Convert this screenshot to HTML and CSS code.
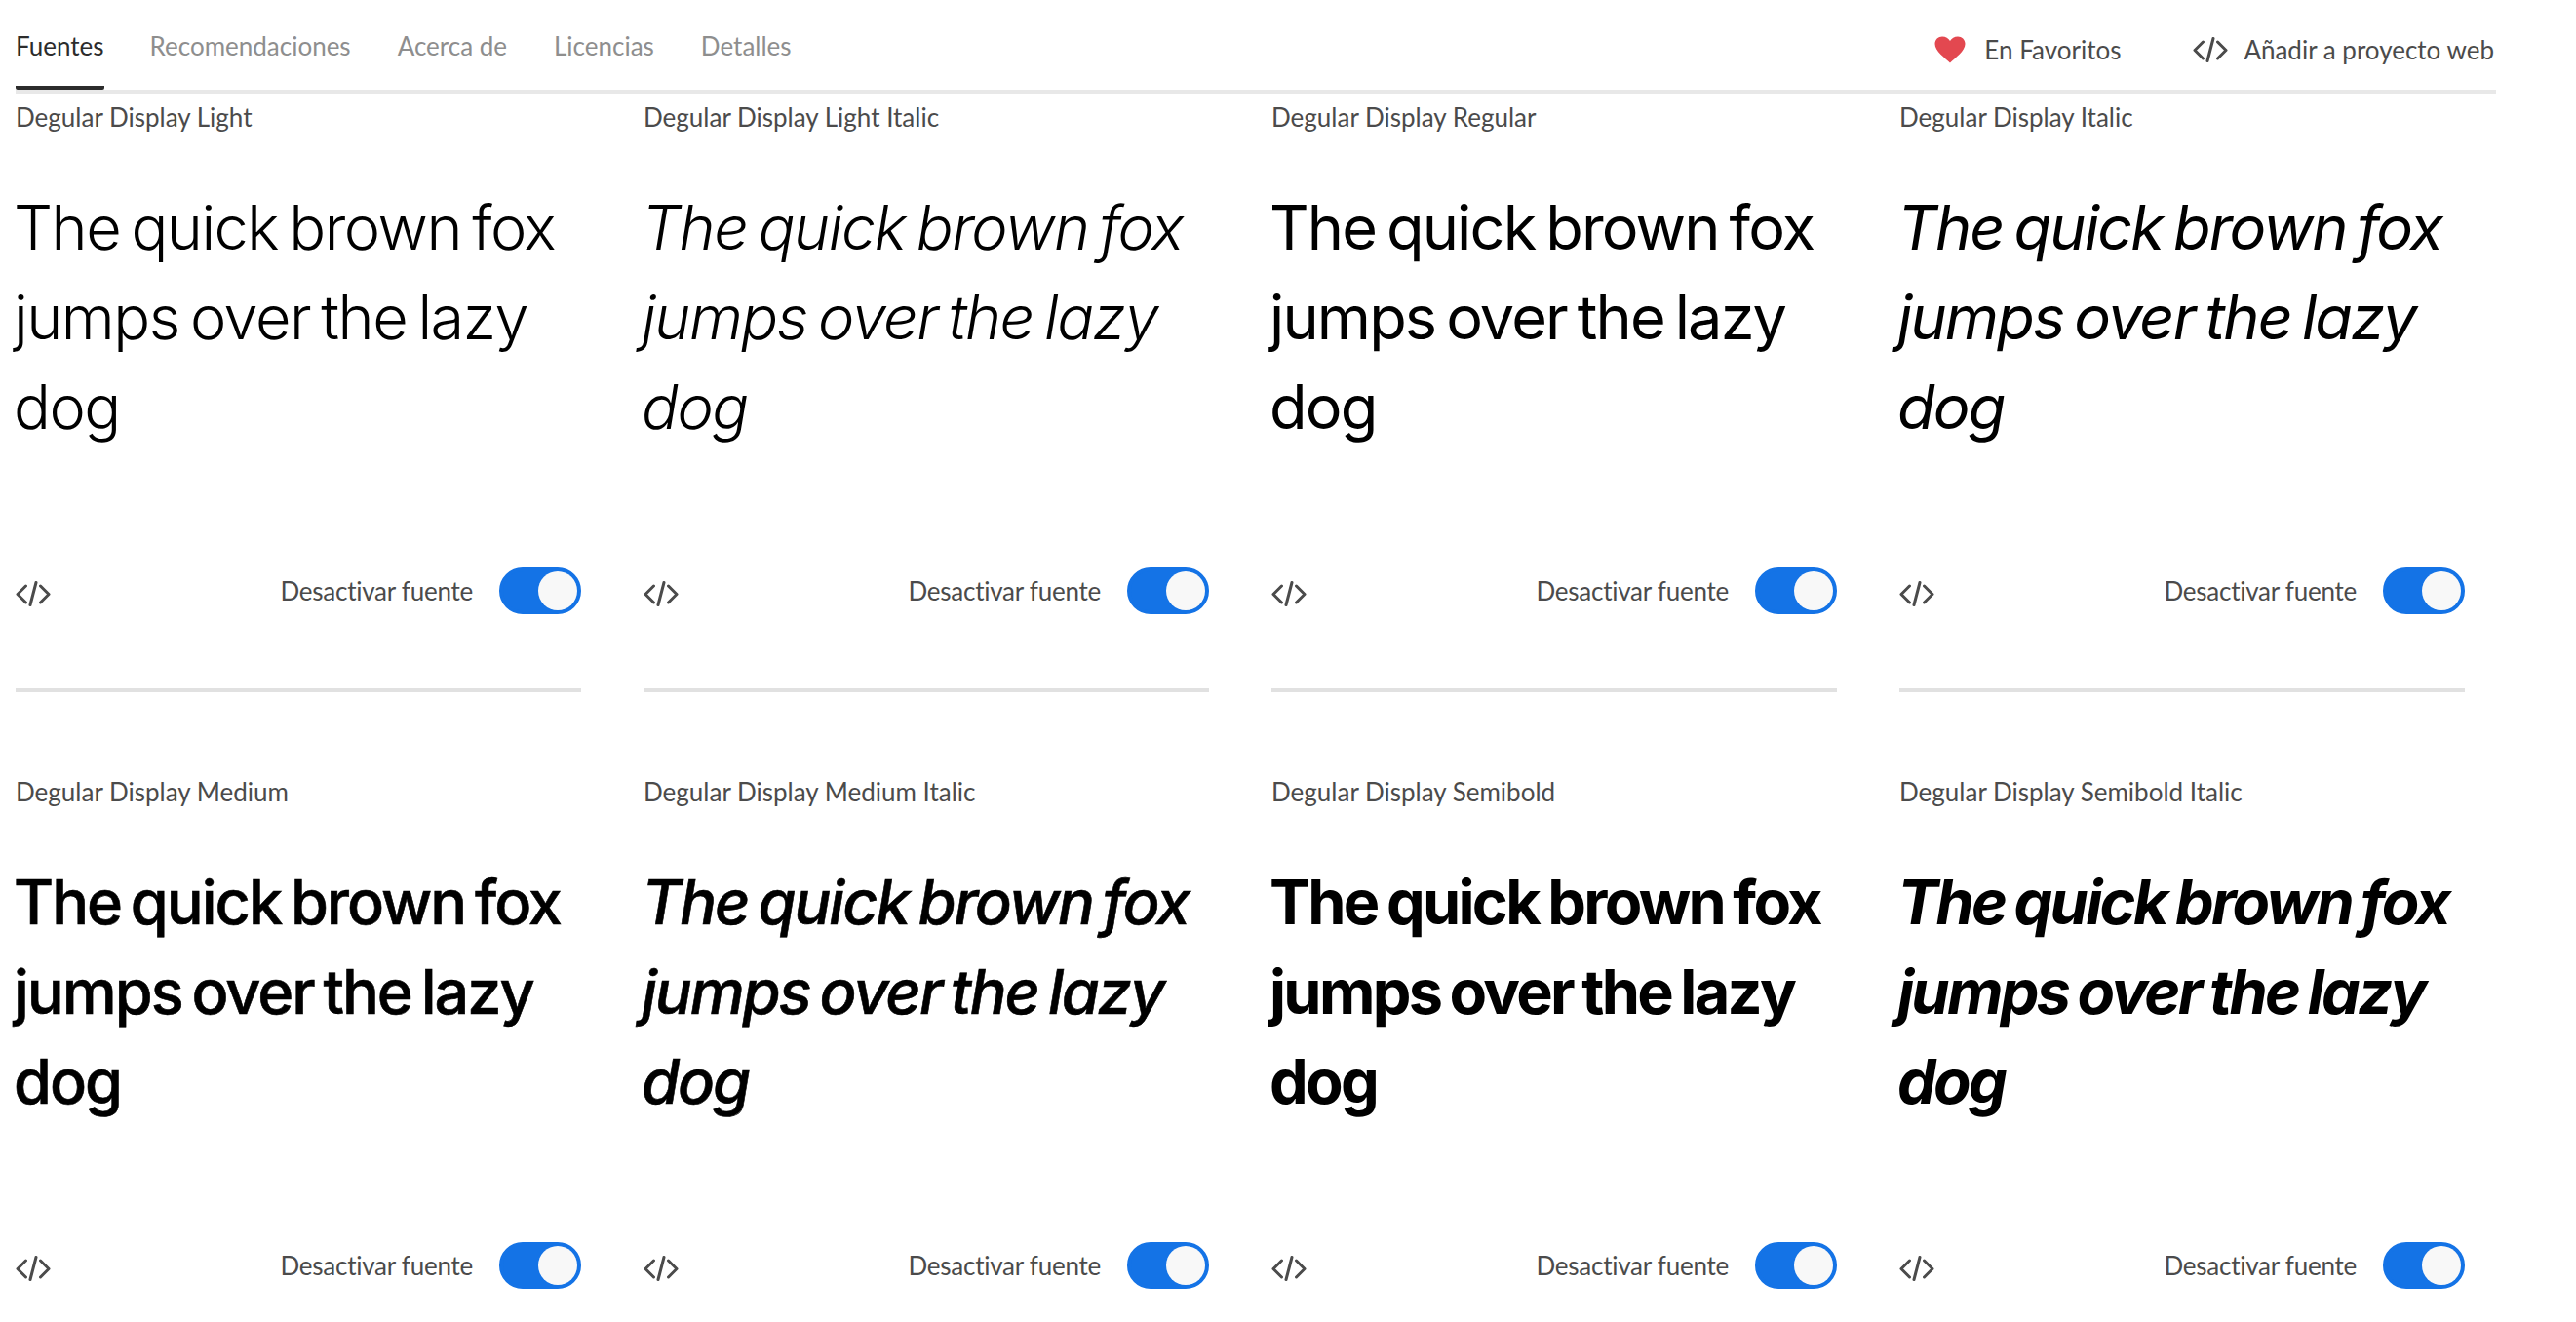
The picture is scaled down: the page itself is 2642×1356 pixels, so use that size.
FILE: index.html
```html
<!DOCTYPE html>
<html lang="es">
  <head>
    <meta charset="UTF-8">
    <title>Degular Display</title>
    <link rel="stylesheet" href="styles.css">
  </head>
  <body>
    <svg class="defs" width="0" height="0">
      <symbol id="code" viewBox="0 0 36 26">
        <path d="M10.5 5 L2 13.5 L10.5 22 M25.5 5 L34 13.5 L25.5 22 M21 1.5 L15 24.5" fill="none" stroke="currentColor" stroke-width="3" stroke-linecap="round" stroke-linejoin="round"/>
      </symbol>
    </svg>

    <header class="topbar">
      <nav class="tabs">
        <a class="tab active">Fuentes</a>
        <a class="tab">Recomendaciones</a>
        <a class="tab">Acerca de</a>
        <a class="tab">Licencias</a>
        <a class="tab">Detalles</a>
      </nav>
      <div class="actions">
        <span class="action">
          <svg class="heart" viewBox="0 0 32 28"><path d="M16 27.5 C11 22.5 0.5 15.5 0.5 8 C0.5 3.5 4 0.5 8 0.5 C11.5 0.5 14.5 2.5 16 5 C17.5 2.5 20.5 0.5 24 0.5 C28 0.5 31.5 3.5 31.5 8 C31.5 15.5 21 22.5 16 27.5 Z"/></svg>
          En Favoritos
        </span>
        <span class="action">
          <svg class="code-icon"><use href="#code"/></svg>
          Añadir a proyecto web
        </span>
      </div>
    </header>

    <main class="fonts">
      <article class="card">
        <h3 class="name">Degular Display Light</h3>
        <p class="sample w300">The quick brown fox jumps over the lazy dog</p>
        <div class="foot">
          <svg class="code-icon"><use href="#code"/></svg>
          <div class="switch-row">Desactivar fuente <span class="switch"></span></div>
        </div>
      </article>
      <article class="card">
        <h3 class="name">Degular Display Light Italic</h3>
        <p class="sample w300 it">The quick brown fox jumps over the lazy dog</p>
        <div class="foot">
          <svg class="code-icon"><use href="#code"/></svg>
          <div class="switch-row">Desactivar fuente <span class="switch"></span></div>
        </div>
      </article>
      <article class="card">
        <h3 class="name">Degular Display Regular</h3>
        <p class="sample w400">The quick brown fox jumps over the lazy dog</p>
        <div class="foot">
          <svg class="code-icon"><use href="#code"/></svg>
          <div class="switch-row">Desactivar fuente <span class="switch"></span></div>
        </div>
      </article>
      <article class="card">
        <h3 class="name">Degular Display Italic</h3>
        <p class="sample w400 it">The quick brown fox jumps over the lazy dog</p>
        <div class="foot">
          <svg class="code-icon"><use href="#code"/></svg>
          <div class="switch-row">Desactivar fuente <span class="switch"></span></div>
        </div>
      </article>
      <article class="card">
        <h3 class="name">Degular Display Medium</h3>
        <p class="sample w500">The quick brown fox jumps over the lazy dog</p>
        <div class="foot">
          <svg class="code-icon"><use href="#code"/></svg>
          <div class="switch-row">Desactivar fuente <span class="switch"></span></div>
        </div>
      </article>
      <article class="card">
        <h3 class="name">Degular Display Medium Italic</h3>
        <p class="sample w500 it">The quick brown fox jumps over the lazy dog</p>
        <div class="foot">
          <svg class="code-icon"><use href="#code"/></svg>
          <div class="switch-row">Desactivar fuente <span class="switch"></span></div>
        </div>
      </article>
      <article class="card">
        <h3 class="name">Degular Display Semibold</h3>
        <p class="sample w600">The quick brown fox jumps over the lazy dog</p>
        <div class="foot">
          <svg class="code-icon"><use href="#code"/></svg>
          <div class="switch-row">Desactivar fuente <span class="switch"></span></div>
        </div>
      </article>
      <article class="card">
        <h3 class="name">Degular Display Semibold Italic</h3>
        <p class="sample w600 it">The quick brown fox jumps over the lazy dog</p>
        <div class="foot">
          <svg class="code-icon"><use href="#code"/></svg>
          <div class="switch-row">Desactivar fuente <span class="switch"></span></div>
        </div>
      </article>
    </main>
  </body>
</html>
```

FILE: styles.css
```css
html {
  background: white;
  overflow: hidden;
}
body {
  margin: 0;
  padding-left: 16px;
  font-family: "Lato", "Noto Sans", sans-serif;
  font-size: 26px;
  color: #4b4b4b;
}
.defs {
  position: absolute;
}
.topbar {
  width: 2544px;
  height: 96px;
  box-sizing: border-box;
  display: flex;
  justify-content: space-between;
  border-bottom: 4px solid #e8e8e8;
}
.tabs {
  display: flex;
  gap: 48px;
}
.tab {
  height: 92px;
  box-sizing: border-box;
  padding-top: 31px;
  color: #8e8e8e;
}
.tab.active {
  margin-right: -1px;
  color: #2c2c2c;
  border-bottom: 4px solid #2c2c2c;
  border-radius: 2px;
}
.actions {
  display: flex;
  gap: 74px;
  align-items: center;
  padding-right: 2px;
  padding-top: 10px;
  height: 82px;
}
.action {
  display: flex;
  align-items: center;
  gap: 16px;
}
.heart {
  width: 32px;
  height: 28px;
  margin-right: 3px;
  fill: #e34850;
}
.code-icon {
  width: 36px;
  height: 26px;
  flex: none;
  color: #4b4b4b;
}
.fonts {
  width: 2512px;
  display: grid;
  grid-template-columns: repeat(4, 580px);
  column-gap: 64px;
  row-gap: 78px;
}
.card {
  height: 614px;
  box-sizing: border-box;
  border-bottom: 4px solid #e1e1e1;
}
.name {
  margin: 0;
  font-size: 26px;
  font-weight: 400;
  line-height: 32px;
  padding-top: 8px;
}
.sample {
  margin: 51px 0 0 -2px;
  height: 276px;
  font-family: "Inter", sans-serif;
  font-size: 63px;
  line-height: 92px;
  word-spacing: -5px;
  color: #000;
}
.w300 { font-weight: 300; letter-spacing: -1.5px; }
.w400 { font-weight: 400; letter-spacing: -1.85px; }
.w500 { font-weight: 500; letter-spacing: -2px; -webkit-text-stroke: 0.6px #000; }
.w600 { font-weight: 700; letter-spacing: -2.7px; word-spacing: -3px; }
.it { font-style: italic; }
.foot {
  margin-top: 119px;
  display: flex;
  justify-content: space-between;
  align-items: center;
}
.foot .code-icon {
  margin-top: 6px;
}
.switch-row {
  display: flex;
  align-items: center;
  gap: 27px;
  letter-spacing: -0.25px;
}
.switch {
  width: 84px;
  height: 48px;
  box-sizing: border-box;
  display: flex;
  justify-content: flex-end;
  border: 4px solid #1473e6;
  border-radius: 24px;
  background: #1473e6;
}
.switch::after {
  content: "";
  width: 40px;
  height: 40px;
  border-radius: 50%;
  background: #f8f8f8;
}
```
